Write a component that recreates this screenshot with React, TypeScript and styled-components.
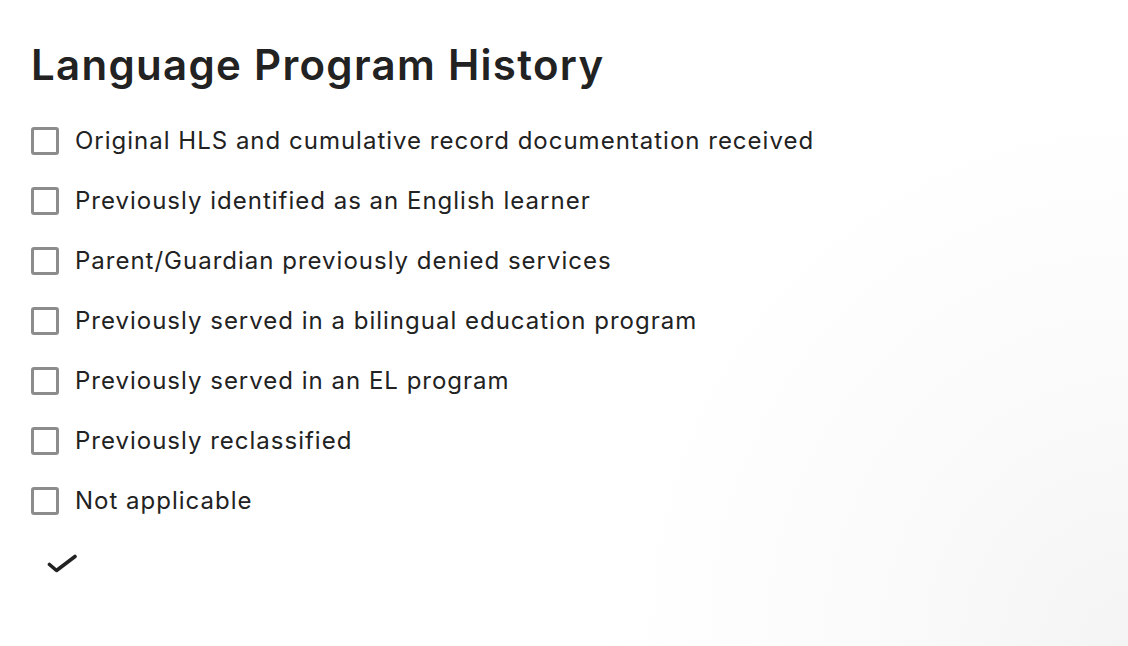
import React from "react";
import styled, { createGlobalStyle } from "styled-components";

const GlobalStyle = createGlobalStyle`
  html, body {
    margin: 0;
    padding: 0;
    height: 100%;
  }
  body {
    font-family: "Inter", "Liberation Sans", sans-serif;
    color: #222222;
    background: #ffffff;
  }
`;

// Styles
const Page = styled.div`
  width: 1128px;
  height: 646px;
  box-sizing: border-box;
  padding: 36px 31px 0;
  background: radial-gradient(
    ellipse 520px 560px at 100% 100%,
    #f4f4f4 0%,
    #fafafa 45%,
    #ffffff 100%
  );
  overflow: hidden;
`;

const Title = styled.h1`
  margin: 0 0 32px;
  font-size: 42px;
  font-weight: 600;
  line-height: 58px;
  letter-spacing: 1.3px;
  color: #222222;
`;

const List = styled.div`
  display: flex;
  flex-direction: column;
  gap: 30px;
`;

const Row = styled.label`
  display: flex;
  align-items: center;
  gap: 16px;
  height: 30px;
`;

const Box = styled.span`
  width: 28px;
  height: 28px;
  box-sizing: border-box;
  border: 3px solid #8c8c8c;
  border-radius: 3px;
  flex-shrink: 0;
`;

const Label = styled.span`
  font-size: 24px;
  line-height: 30px;
  letter-spacing: 1px;
  color: #222222;
`;

const Confirm = styled.div`
  display: flex;
  align-items: center;
  height: 30px;
  margin-top: 32px;
  padding-left: 16px;
`;

const items = [
  "Original HLS and cumulative record documentation received",
  "Previously identified as an English learner",
  "Parent/Guardian previously denied services",
  "Previously served in a bilingual education program",
  "Previously served in an EL program",
  "Previously reclassified",
  "Not applicable",
];

const CheckIcon = () => (
  <svg width="32" height="20" viewBox="0 0 32 20">
    <path
      d="M2.5 11.5 L9.5 17.5 L28 3.5"
      fill="none"
      stroke="#222222"
      strokeWidth="3.6"
      strokeLinecap="round"
      strokeLinejoin="round"
    />
  </svg>
);

const App: React.FC = () => {
  return (
    <>
      <GlobalStyle />
      <Page>
        <Title>Language Program History</Title>
        <List>
          {items.map((text) => (
            <Row key={text}>
              <Box />
              <Label>{text}</Label>
            </Row>
          ))}
        </List>
        <Confirm>
          <CheckIcon />
        </Confirm>
      </Page>
    </>
  );
};

export default App;
